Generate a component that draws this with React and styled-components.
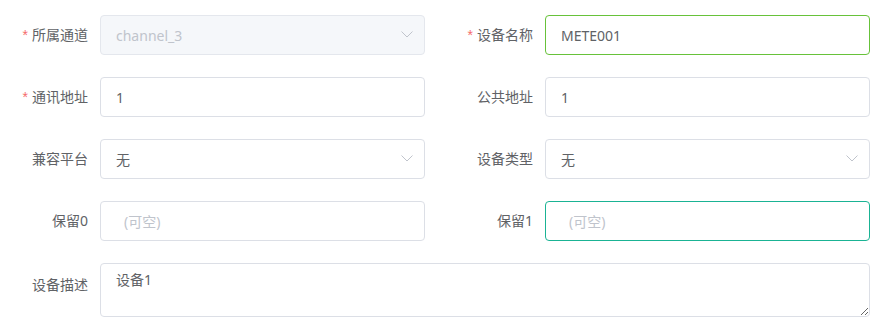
import React from 'react';
import styled, { createGlobalStyle } from 'styled-components';

const GlobalStyle = createGlobalStyle`
  html, body {
    margin: 0;
    padding: 0;
    background: #fff;
  }
  body {
    font-family: "Noto Sans", "Noto Sans CJK SC", sans-serif;
  }
  input::placeholder, textarea::placeholder {
    color: #c0c4cc;
  }
`;

const Form = styled.form`
  width: 870px;
  padding-top: 15px;
  display: grid;
  grid-template-columns: 425px 425px;
  column-gap: 20px;
  row-gap: 22px;
`;

const Item = styled.div`
  display: flex;
  align-items: ${p => (p.$top ? 'flex-start' : 'center')};
  grid-column: ${p => (p.$wide ? '1 / span 2' : 'auto')};
`;

const Label = styled.label`
  width: 100px;
  flex: none;
  box-sizing: border-box;
  padding-right: 12px;
  text-align: right;
  font-size: 14px;
  line-height: 40px;
  color: #606266;
  margin-top: ${p => (p.$top ? '2px' : '0')};
`;

const Star = styled.span`
  font-family: "Liberation Sans", sans-serif;
  color: #f56c6c;
  margin-right: 4px;
`;

const Field = styled.div`
  position: relative;
  flex: 1;
  display: flex;
`;

const Input = styled.input`
  width: 100%;
  height: 40px;
  box-sizing: border-box;
  border: 1px solid ${p => p.$border || '#dcdfe6'};
  border-radius: 4px;
  padding: 0 30px 0 ${p => (p.$indent ? '23px' : '15px')};
  font-family: inherit;
  font-size: 14px;
  color: ${p => (p.disabled ? '#c0c4cc' : '#606266')};
  background: ${p => (p.disabled ? '#f5f7fa' : '#fff')};
  border-color: ${p => (p.disabled ? '#e4e7ed' : p.$border || '#dcdfe6')};
  outline: none;
`;

const TextArea = styled.textarea`
  width: 100%;
  height: 54px;
  box-sizing: border-box;
  border: 1px solid #dcdfe6;
  border-radius: 4px;
  padding: 5px 15px;
  font-family: inherit;
  font-size: 14px;
  line-height: 1.5;
  color: #606266;
  resize: vertical;
  outline: none;
`;

const Arrow = styled.svg`
  position: absolute;
  right: 12px;
  top: 50%;
  margin-top: -4px;
  width: 12px;
  height: 7px;
  pointer-events: none;
`;

const Chevron = () => (
  <Arrow viewBox="0 0 12 7">
    <path d="M0.5 0.5 L6 6 L11.5 0.5" fill="none" stroke="#c0c4cc" strokeWidth="1" />
  </Arrow>
);

const Row = ({ label, required, children, wide, top }) => (
  <Item $wide={wide} $top={top}>
    <Label $top={top}>
      {required && <Star>*</Star>}
      {label}
    </Label>
    <Field>{children}</Field>
  </Item>
);

const App = () => (
  <>
    <GlobalStyle />
    <Form>
      <Row label="所属通道" required>
        <Input disabled defaultValue="channel_3" />
        <Chevron />
      </Row>
      <Row label="设备名称" required>
        <Input defaultValue="METE001" $border="#67c23a" />
      </Row>
      <Row label="通讯地址" required>
        <Input defaultValue="1" />
      </Row>
      <Row label="公共地址">
        <Input defaultValue="1" />
      </Row>
      <Row label="兼容平台">
        <Input readOnly defaultValue="无" />
        <Chevron />
      </Row>
      <Row label="设备类型">
        <Input readOnly defaultValue="无" />
        <Chevron />
      </Row>
      <Row label="保留0">
        <Input placeholder="(可空)" $indent />
      </Row>
      <Row label="保留1">
        <Input placeholder="(可空)" $indent $border="#1ab394" />
      </Row>
      <Row label="设备描述" wide top>
        <TextArea defaultValue="设备1" />
      </Row>
    </Form>
  </>
);

export default App;
